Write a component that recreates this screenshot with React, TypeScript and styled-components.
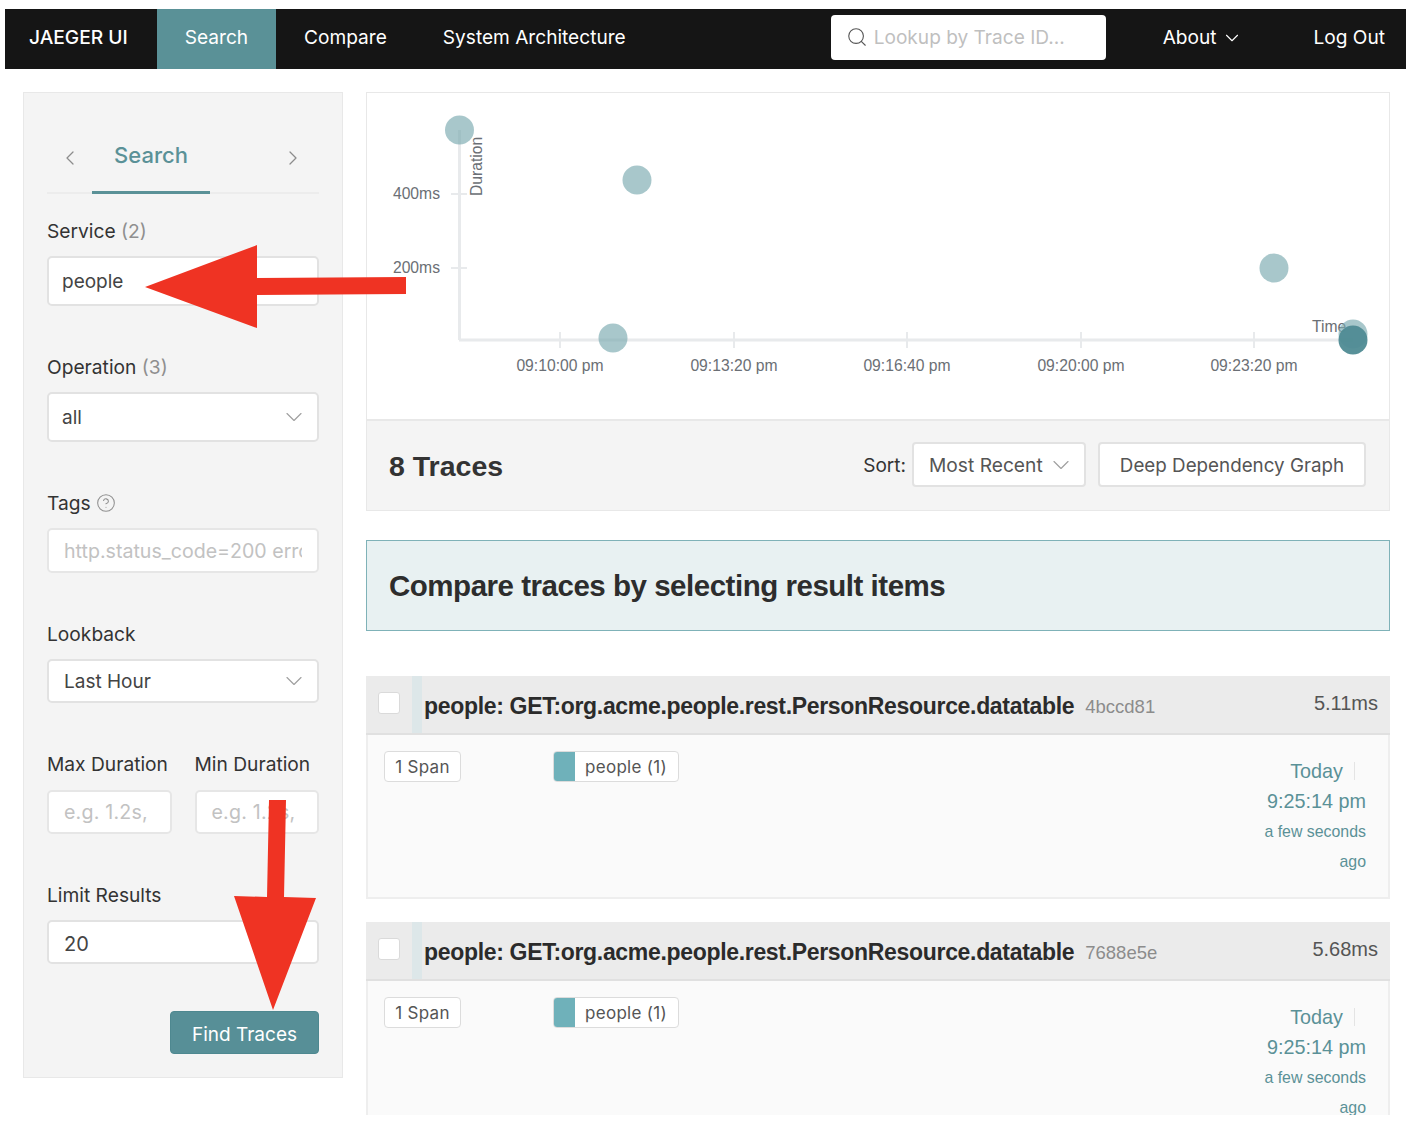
import React from 'react'
import styled, { createGlobalStyle } from 'styled-components'
import { ChevronDown, ChevronLeft, ChevronRight, CircleHelp, Search } from 'lucide-react'

const teal = '#5a9197'
const sans = '"Inter", "Liberation Sans", Arial, sans-serif'
const helv = '"Liberation Sans", Arial, sans-serif'

const GlobalStyle = createGlobalStyle`
  html, body { margin: 0; padding: 0; background: #fff; }
  body { font-family: ${sans}; color: #333; }
`

const Page = styled.div`
  position: relative;
  width: 1412px;
  height: 1115px;
  padding: 9px 6px 0 5px;
  box-sizing: border-box;
  overflow: hidden;
`

const NavBar = styled.nav`
  display: flex;
  align-items: stretch;
  height: 60px;
  background: #151515;
  color: #fff;
  font-size: 19.1px;
  padding-right: 21px;
`

const Brand = styled.div`
  display: flex;
  align-items: center;
  padding: 0 29px 4px 24px;
  font-weight: 500;
  font-size: 19.2px;
`

const NavTab = styled.div<{ $active?: boolean }>`
  display: flex;
  align-items: center;
  padding: 0 28px 4px;
  background: ${(p) => (p.$active ? teal : 'transparent')};
`

const NavSpacer = styled.div`
  flex: 1;
`

const LookupBox = styled.div`
  align-self: center;
  display: flex;
  align-items: center;
  gap: 6px;
  box-sizing: border-box;
  width: 275px;
  height: 45px;
  padding: 0 0 1px 15px;
  margin: 0 57px 3px 0;
  background: #fff;
  border-radius: 4px;
  color: #bfbfbf;
  svg { color: #555; }
`

const NavMenu = styled.div`
  display: flex;
  align-items: center;
  gap: 4px;
  margin-right: 71px;
  padding-bottom: 4px;
  svg { margin-top: 2px; }
`

const NavLink = styled.div`
  display: flex;
  align-items: center;
  padding-bottom: 4px;
`

const Main = styled.main`
  display: grid;
  grid-template-columns: 320px 1024px;
  column-gap: 23px;
  align-items: start;
  padding: 23px 0 0 18px;
`

const Sider = styled.aside`
  box-sizing: border-box;
  height: 986px;
  padding: 0 23px;
  background: #f4f4f4;
  border: 1px solid #e8e8e8;
  font-size: 19.2px;
`

const TabBar = styled.div`
  display: flex;
  align-items: center;
  height: 101px;
  box-sizing: border-box;
  padding: 26px 14px 0 10.5px;
  border-bottom: 2px solid #ececec;
  color: #8c8c8c;
  margin-bottom: 25px;
`

const PrevIcon = styled(ChevronLeft)`
  margin-top: 4px;
`

const NextIcon = styled(ChevronRight)`
  margin: 4px 0 0 auto;
`

const ActiveTab = styled.div`
  align-self: stretch;
  display: flex;
  align-items: center;
  justify-content: center;
  width: 118px;
  margin-left: 10.5px;
  margin-bottom: -2px;
  box-sizing: border-box;
  border-bottom: 3px solid ${teal};
  color: ${teal};
  font-size: 22px;
  font-weight: 500;
`

const Field = styled.div`
  margin-bottom: 49px;
`

const FieldLabel = styled.div<{ $gap?: number }>`
  display: flex;
  align-items: center;
  gap: 5px;
  height: 25px;
  padding-bottom: 1px;
  box-sizing: border-box;
  margin-bottom: ${(p) => p.$gap ?? 12}px;
  color: #333;
`

const Muted = styled.span`
  color: #8f8f8f;
`

const Control = styled.div<{ $h: number; $inset?: number }>`
  display: flex;
  align-items: center;
  justify-content: space-between;
  box-sizing: border-box;
  height: ${(p) => p.$h}px;
  padding: 0 16px 0 ${(p) => p.$inset ?? 15}px;
  background: #fff;
  border: 2px solid #e2e2e2;
  border-radius: 5px;
  white-space: nowrap;
  font-size: 19px;
  color: #444;
  svg { color: #a0a0a0; flex: none; margin-right: -7px; }
`

const LimitControl = styled(Control)`
  padding-top: 3px;
  font-size: 20px;
`

const PlaceholderInput = styled.input<{ $h: number }>`
  display: block;
  box-sizing: border-box;
  width: 100%;
  height: ${(p) => p.$h}px;
  padding: 0 15px;
  background: #fff;
  border: 2px solid #e6e6e6;
  border-radius: 5px;
  font-family: ${sans};
  font-size: 19.6px;
  outline: none;
  &::placeholder { color: #c2c2c2; opacity: 1; }
`

const DurationInput = styled(PlaceholderInput)`
  letter-spacing: 0.2px;
`

const DurationRow = styled.div`
  display: grid;
  grid-template-columns: 1fr 1fr;
  column-gap: 23px;
  margin-bottom: 49px;
`

const FindRow = styled.div`
  display: flex;
  justify-content: flex-end;
  margin-top: -2px;
`

const FindButton = styled.button`
  width: 149px;
  height: 43px;
  padding-top: 4px;
  border: 1px solid #4e8890;
  border-radius: 4px;
  background: #578f97;
  color: #fff;
  font-family: ${sans};
  font-size: 19px;
`

const Content = styled.section`
  display: flex;
  flex-direction: column;
`

const ChartPanel = styled.div`
  height: 327px;
  background: #fff;
  border: 1px solid #e8e8e8;
  border-bottom: 0;
  box-sizing: border-box;
`

const ChartSvg = styled.svg`
  display: block;
  font-family: ${helv};
`

const ResultsBar = styled.div`
  display: flex;
  align-items: center;
  box-sizing: border-box;
  height: 92px;
  padding: 0 23px 2px 22px;
  background: #f4f4f4;
  border: 1px solid #e8e8e8;
  border-top: 2px solid #e8e8e8;
`

const ResultsTitle = styled.h2`
  flex: 1;
  margin: 0;
  padding-top: 4px;
  font-family: ${helv};
  font-size: 28.5px;
  font-weight: 700;
  color: #333;
`

const SortLabel = styled.span`
  font-size: 19px;
  padding-top: 2px;
  margin-right: 6px;
  color: #333;
`

const SortSelect = styled.div`
  display: flex;
  align-items: center;
  justify-content: space-between;
  box-sizing: border-box;
  width: 174px;
  height: 45px;
  padding: 0 9px 0 15px;
  background: #fff;
  border: 2px solid #e2e2e2;
  border-radius: 4px;
  font-size: 19.2px;
  color: #555;
  svg { color: #a0a0a0; }
`

const GraphButton = styled.div`
  display: flex;
  align-items: center;
  justify-content: center;
  box-sizing: border-box;
  width: 268px;
  height: 45px;
  margin-left: 12px;
  padding-top: 1px;
  background: #fff;
  border: 2px solid #e2e2e2;
  border-radius: 4px;
  font-size: 18.8px;
  color: #555;
`

const CompareBanner = styled.div`
  display: flex;
  align-items: center;
  box-sizing: border-box;
  height: 91px;
  margin-top: 29px;
  margin-bottom: 45px;
  padding-left: 22px;
  background: #e8f1f2;
  border: 1px solid #7fb2b8;
  font-family: ${helv};
  font-size: 29.5px;
  font-weight: 700;
  letter-spacing: -0.48px;
  color: #2d2d2d;
`

const TraceCard = styled.article`
  margin-bottom: 23px;
`

const TraceHeader = styled.header`
  display: flex;
  align-items: center;
  height: 59px;
  box-sizing: border-box;
  background: #ebebeb;
  border-bottom: 2px solid #e0e0e0;
  font-family: ${helv};
`

const CheckCell = styled.div`
  display: flex;
  align-items: center;
  justify-content: center;
  width: 46px;
  align-self: stretch;
  padding-bottom: 3px;
`

const CheckBox = styled.div`
  width: 22px;
  height: 22px;
  box-sizing: border-box;
  background: #fff;
  border: 1px solid #dadada;
  border-radius: 3px;
`

const ServiceStripe = styled.div`
  align-self: stretch;
  width: 10px;
  margin-right: 2px;
  background: #dde7e9;
`

const TraceName = styled.span`
  padding-top: 3px;
  font-size: 23px;
  font-weight: 700;
  color: #2b2b2b;
  letter-spacing: -0.32px;
`

const TraceId = styled.span`
  flex: 1;
  margin-left: 11px;
  padding-top: 4px;
  font-size: 18.5px;
  color: #8c8c8c;
`

const TraceDuration = styled.span`
  margin-right: 12px;
  margin-bottom: 2px;
  font-size: 20px;
  color: #555;
`

const TraceBody = styled.div`
  display: flex;
  justify-content: space-between;
  box-sizing: border-box;
  height: 164px;
  padding: 16px 22px 0 16px;
  background: #fafafa;
  border: 2px solid #eee;
  border-top: 0;
`

const TagRow = styled.div`
  display: flex;
  align-items: flex-start;
  gap: 92px;
  font-size: 17px;
  color: #555;
`

const CountTag = styled.div`
  display: flex;
  align-items: center;
  box-sizing: border-box;
  width: 77px;
  height: 31px;
  justify-content: center;
  background: #fff;
  border: 1px solid #dcdcdc;
  border-radius: 4px;
  letter-spacing: 0.3px;
`

const ServiceTag = styled.div`
  display: flex;
  align-items: center;
  box-sizing: border-box;
  height: 31px;
  padding-right: 11px;
  background: #fff;
  border: 1px solid #dcdcdc;
  border-radius: 4px;
  letter-spacing: 0.3px;
  overflow: hidden;
  &::before {
    content: '';
    align-self: stretch;
    width: 21px;
    margin-right: 10px;
    background: #6fb1ba;
  }
`

const TimeColumn = styled.div`
  padding-top: 5px;
  text-align: right;
  color: ${teal};
  font-family: ${helv};
  line-height: 30px;
  font-size: 19.8px;
`

const DayLine = styled.div`
  display: flex;
  justify-content: flex-end;
  align-items: center;
  gap: 11px;
  margin-right: 11px;
  &::after {
    content: '';
    width: 1px;
    height: 18px;
    background: #e4e4e4;
  }
`

const AgoLine = styled.div`
  font-size: 15.9px;
  &:nth-child(3) { margin-top: 1px; }
`

const ArrowLayer = styled.svg`
  position: absolute;
  left: 0;
  top: 0;
  pointer-events: none;
`

const xTicks = [
  { x: 560, label: '09:10:00 pm' },
  { x: 734, label: '09:13:20 pm' },
  { x: 907, label: '09:16:40 pm' },
  { x: 1081, label: '09:20:00 pm' },
  { x: 1254, label: '09:23:20 pm' },
]
const yTicks = [
  { y: 194, label: '400ms' },
  { y: 268, label: '200ms' },
]
const dots = [
  [459.5, 130],
  [637, 180],
  [1274, 268],
  [613, 338],
  [1353, 334],
]

// chart coordinates are page pixels, shifted by the panel's origin
const TraceChart = () => (
  <ChartSvg width={1022} height={326} viewBox="367 93 1022 326">
    <g stroke="#e8eaec">
      <line x1={459.5} y1={130} x2={459.5} y2={340} strokeWidth={3} />
      <line x1={459} y1={340} x2={1353} y2={340} strokeWidth={3} />
      {yTicks.map((t) => (
        <line key={t.y} x1={451} x2={467} y1={t.y} y2={t.y} strokeWidth={2} />
      ))}
      {xTicks.map((t) => (
        <line key={t.x} x1={t.x} x2={t.x} y1={332} y2={348} strokeWidth={2} />
      ))}
    </g>
    <g fill="#6b6f75" fontSize={15.7}>
      {yTicks.map((t) => (
        <text key={t.y} x={440} y={t.y + 5} textAnchor="end">
          {t.label}
        </text>
      ))}
      {xTicks.map((t) => (
        <text key={t.x} x={t.x} y={371} textAnchor="middle">
          {t.label}
        </text>
      ))}
      <text x={1312} y={332}>Time</text>
      <text transform="translate(482 196) rotate(-90)" fontSize={15.7}>Duration</text>
    </g>
    {dots.map(([cx, cy]) => (
      <circle key={cx} cx={cx} cy={cy} r={14.5} fill="#7aa9af" fillOpacity={0.65} />
    ))}
    <circle cx={1353} cy={340} r={14.5} fill="#4f8b93" fillOpacity={0.95} />
  </ChartSvg>
)

const Trace = ({ id, duration }: { id: string; duration: string }) => (
  <TraceCard>
    <TraceHeader>
      <CheckCell>
        <CheckBox />
      </CheckCell>
      <ServiceStripe />
      <TraceName>people: GET:org.acme.people.rest.PersonResource.datatable</TraceName>
      <TraceId>{id}</TraceId>
      <TraceDuration>{duration}</TraceDuration>
    </TraceHeader>
    <TraceBody>
      <TagRow>
        <CountTag>1 Span</CountTag>
        <ServiceTag>people (1)</ServiceTag>
      </TagRow>
      <TimeColumn>
        <DayLine>Today</DayLine>
        <div>9:25:14 pm</div>
        <AgoLine>a few seconds</AgoLine>
        <AgoLine>ago</AgoLine>
      </TimeColumn>
    </TraceBody>
  </TraceCard>
)

export default function App() {
  return (
    <Page>
      <GlobalStyle />
      <NavBar>
        <Brand>JAEGER UI</Brand>
        <NavTab $active>Search</NavTab>
        <NavTab>Compare</NavTab>
        <NavTab>System Architecture</NavTab>
        <NavSpacer />
        <LookupBox>
          <Search size={22} strokeWidth={1.2} />
          Lookup by Trace ID...
        </LookupBox>
        <NavMenu>
          About
          <ChevronDown size={22} strokeWidth={1.2} />
        </NavMenu>
        <NavLink>Log Out</NavLink>
      </NavBar>
      <Main>
        <Sider>
          <TabBar>
            <PrevIcon size={24} strokeWidth={1.25} />
            <ActiveTab>Search</ActiveTab>
            <NextIcon size={24} strokeWidth={1.25} />
          </TabBar>
          <Field>
            <FieldLabel>
              <span>
                Service <Muted>(2)</Muted>
              </span>
            </FieldLabel>
            <Control $h={50} $inset={13}>people</Control>
          </Field>
          <Field>
            <FieldLabel>
              <span>
                Operation <Muted>(3)</Muted>
              </span>
            </FieldLabel>
            <Control $h={50} $inset={13}>
              all
              <ChevronDown size={28} strokeWidth={1} />
            </Control>
          </Field>
          <Field>
            <FieldLabel>
              Tags
              <CircleHelp size={20} strokeWidth={1.25} color="#8f8f8f" />
            </FieldLabel>
            <PlaceholderInput $h={45} readOnly placeholder="http.status_code=200 error=true" />
          </Field>
          <Field>
            <FieldLabel>Lookback</FieldLabel>
            <Control $h={44}>
              Last Hour
              <ChevronDown size={28} strokeWidth={1} />
            </Control>
          </Field>
          <DurationRow>
            <div>
              <FieldLabel $gap={13}>Max Duration</FieldLabel>
              <DurationInput $h={44} readOnly placeholder="e.g. 1.2s," />
            </div>
            <div>
              <FieldLabel $gap={13}>Min Duration</FieldLabel>
              <DurationInput $h={44} readOnly placeholder="e.g. 1.2s," />
            </div>
          </DurationRow>
          <Field>
            <FieldLabel>Limit Results</FieldLabel>
            <LimitControl $h={44}>20</LimitControl>
          </Field>
          <FindRow>
            <FindButton>Find Traces</FindButton>
          </FindRow>
        </Sider>
        <Content>
          <ChartPanel>
            <TraceChart />
          </ChartPanel>
          <ResultsBar>
            <ResultsTitle>8 Traces</ResultsTitle>
            <SortLabel>Sort:</SortLabel>
            <SortSelect>
              Most Recent
              <ChevronDown size={28} strokeWidth={1} />
            </SortSelect>
            <GraphButton>Deep Dependency Graph</GraphButton>
          </ResultsBar>
          <CompareBanner>Compare traces by selecting result items</CompareBanner>
          <Trace id="4bccd81" duration="5.11ms" />
          <Trace id="7688e5e" duration="5.68ms" />
        </Content>
      </Main>
      <ArrowLayer width={1412} height={1115} viewBox="0 0 1412 1115">
        <polygon
          fill="#ef3323"
          points="145,287 257,245 257,278 406,277 406,294 257,295 257,328"
        />
        <polygon
          fill="#ef3323"
          points="269,800 286,800 284,897 316,898 273,1010 234,896 267,897"
        />
      </ArrowLayer>
    </Page>
  )
}
